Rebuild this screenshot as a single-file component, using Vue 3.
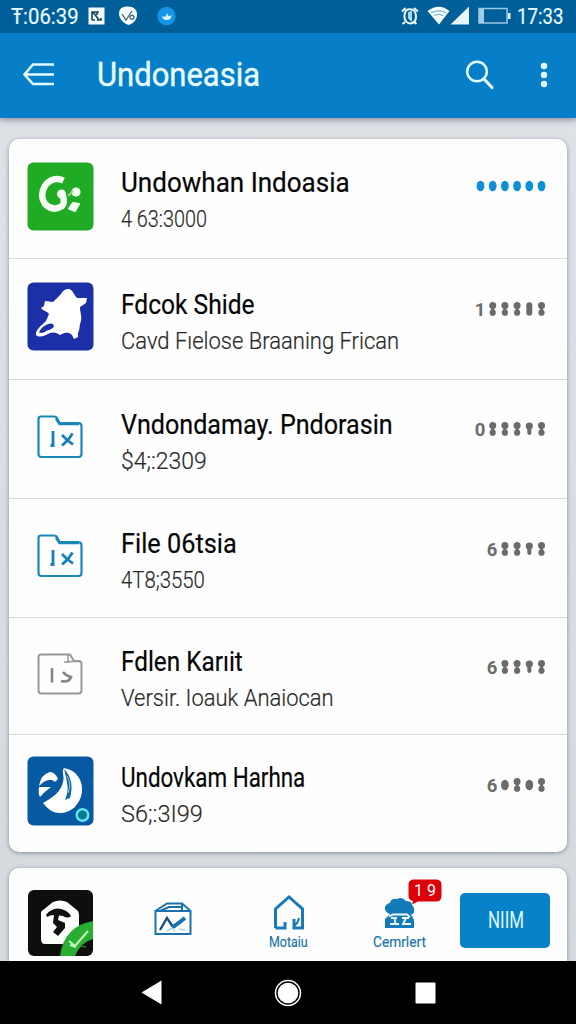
<script setup>
const dotX = [5.5, 17.7, 29.9, 42.1, 54.3, 66.5]

// kinds: o = single drop, b = double bead, p = pin, i = pill
const rows = [
  { icon: 'green', title: 'Undowhan Indoasia', tw: 229, sub: '4 63:3000', sw: 86, h: 120, ty: 1.5, dy: -0.5, lead: '', dots: 'oooooo', blue: true },
  { icon: 'navy', title: 'Fdcok Shide', tw: 134, sub: 'Cavd Fıelose Braaning Frican', sw: 278, h: 121, ty: 3, dy: 1.5, lead: '1', dots: ' bbbib' },
  { icon: 'folder', title: 'Vndondamay. Pndorasin', tw: 272, sub: '$4;:2309', sw: 86, h: 119, ty: 3, dy: 2, lead: '0', dots: ' bbbpb' },
  { icon: 'folder', title: 'File 06tsia', tw: 116, sub: '4T8;3550', sw: 84, h: 119, ty: 2.5, dy: 2.5, lead: '6', dots: '  bbpb' },
  { icon: 'file', title: 'Fdlen Karıit', tw: 122, sub: 'Versir. Ioauk Anaiocan', sw: 213, h: 117, ty: 3, dy: 3, lead: '6', dots: '  bbpb' },
  { icon: 'wave', title: 'Undovkam Harhna', tw: 184, sub: 'S6;:3I99', sw: 82, h: 117, ty: 1, dy: 3.5, lead: '6', dots: '  obob' },
]

// Stretches a label horizontally to the given width
const vFit = {
  mounted(el, { value }) {
    el.style.transform = `scaleX(${value / el.offsetWidth})`
  },
}
</script>

<template>
  <div class="screen">
    <div class="status">
      <span class="clock-left"><b v-fit="68">Ŧ:06:39</b></span>
      <svg class="notif" width="90" height="20" viewBox="0 0 90 20">
        <path d="M0.5 1.5h16v17h-16z" fill="#f4fcff" />
        <path d="M4 14V6h7M5 6l6 8M4 14h3M9 6v3M9 14h4v-2" stroke="#174761" stroke-width="1.6" fill="none" />
        <path d="M39.500 .5C46 .5 49 4 49 8.500C49 14 45 17.500 41 19C36 18 31 13 31 7.500C31 3 34 .5 39.500 .5Z" fill="#f4fcff" />
        <path d="M34 8l4 6 4-6M44 5l-2 3M42 11.500a2 2 0 1 0 3.500-1.500a2 2 0 0 0-3.500 1.500" stroke="#416477" stroke-width="1.3" fill="none" />
        <circle cx="78.500" cy="10" r="9.200" fill="#1594e8" />
        <path d="M74 10q2 1.500 4 0l1-3 1.500 3q1.500 .5 3-1q0 5-5 5q-4 0-4.500-4Z" fill="#d9f5ff" />
      </svg>
      <svg class="system" width="112" height="20" viewBox="0 0 112 20">
        <g fill="none" stroke="#e9faff" stroke-width="2">
          <path d="M6 4.500Q2.500 11 6.500 16Q11 19.500 15 15Q17.500 9 14 4.500Q9.500 2 6 4.500Z" />
          <path d="M2 5.500L5.500 2M14 2l4 3.500M5 16l-2.500 2M14 16l2.500 2" />
          <path d="M9 6v6l2 2V5" stroke-width="1.500" />
        </g>
        <path d="M27.500 5Q39 -3.500 49.500 5L39 18.500Z" fill="#f2fcff" />
        <path d="M31 7q8-4.500 15 0M34 9.500q5-2.500 9 0" fill="none" stroke="#69a4c8" stroke-width="1" />
        <path d="M50.500 18.500L69 .5v18Z" fill="#e5f6ff" />
        <path d="M79 2.500h28v14.500H79z" fill="none" stroke="#9bc8e2" stroke-width="1.500" />
        <path d="M79 3h5v14h-5z" fill="#9ecbe6" />
        <path d="M108 7h2.500v6H108z" fill="#e3f5ff" />
      </svg>
      <span class="clock-right"><b v-fit="47">17:33</b></span>
    </div>

    <header>
      <svg class="back" width="32" height="24" viewBox="0 0 32 24">
        <path d="M31 1.500H10L1.500 11.500L10 21H31M3 11.500H31" fill="none" stroke="#e2fbff" stroke-width="2.600" />
      </svg>
      <h1><span v-fit="163">Undoneasia</span></h1>
      <svg class="search" width="30" height="32" viewBox="0 0 30 32">
        <circle cx="12" cy="12.500" r="9.800" fill="none" stroke="#e2fbff" stroke-width="2.500" />
        <path d="M19 20L27 28.500" stroke="#e2fbff" stroke-width="3.200" stroke-linecap="round" />
      </svg>
      <svg class="more" width="8" height="26" viewBox="0 0 8 26" fill="#e6fbff">
        <circle cx="4" cy="4" r="3.200" /><circle cx="4" cy="13" r="3.200" /><circle cx="4" cy="22" r="3.200" />
      </svg>
    </header>

    <main>
      <section class="card">
        <div v-for="(r, n) in rows" :key="n" class="row" :style="{ height: r.h + 'px' }">
          <div class="icon">
            <svg v-if="r.icon === 'green'" width="67" height="69" viewBox="0 0 67 69">
              <rect x=".5" y=".5" width="66" height="68" rx="6" fill="#1fab24" />
              <path d="M36.500 18.500Q26 14 18.500 23Q12 33 18 42Q26 50 35 44Q38 41 36 34" fill="none" stroke="#f7fff5" stroke-width="6.500" />
              <circle cx="34.500" cy="32" r="4.500" fill="#f7fff5" />
              <circle cx="49" cy="30" r="4.600" fill="#f7fff5" />
              <path d="M41 34L46 29" stroke="#8edb85" stroke-width="2" />
              <path d="M46 41L52 42L48 49L42 46.500Z" fill="#f7fff5" stroke="#f7fff5" stroke-width="2" stroke-linejoin="round" />
            </svg>
            <svg v-else-if="r.icon === 'navy'" width="67" height="69" viewBox="0 0 67 69">
              <rect x=".5" y=".5" width="66" height="68" rx="6" fill="#1b2fa6" />
              <path d="M18 19L26 20C29 17 32 14 34 12C36 8 39 7 42 7C46 8 47 13 50 16L60 16L59 21L53 25C53 31 55 33 54 39C52 44 53 48 51 51L51 55L47 57L45 53C41 49 36 51 33 53C29 50 26 50 23 51C18 54 12 56 9 53C8 48 15 43 19 39L22 32C20 29 16 29 14 26L17 24Z" fill="white" />
              <path d="M12 50.500Q14 45 20 42.500Q26 40 27 44Q26 47 20 48.500Q16 52 12 50.500Z" fill="#1b2fa6" />
            </svg>
            <svg v-else-if="r.icon === 'folder'" class="small" width="46" height="44" viewBox="0 0 46 44">
              <path d="M4 1.500H17Q19.500 1.500 20.500 4L22.500 8H41Q44.500 8 44.500 11V39Q44.500 42 41.500 42H4.500Q1.500 42 1.500 39V4Q1.500 1.500 4 1.500Z" fill="none" stroke="#1888b7" stroke-width="2.200" />
              <path d="M19 3.500L22.500 9H42" stroke="#1888b7" stroke-width="2.400" fill="none" />
              <path d="M16 16V30.500H13.500M25 20L30 25L36 29.500M35.500 18.500L31 25L25 30.500" fill="none" stroke="#1680bd" stroke-width="2.800" />
            </svg>
            <svg v-else-if="r.icon === 'file'" class="small" width="46" height="44" viewBox="0 0 46 44">
              <path d="M4 2.500H33L37 9H42Q44.500 9 44.500 12V38.500Q44.500 41.500 41.500 41.500H4.500Q1.500 41.500 1.500 38.500V5.500Q1.500 2.500 4 2.500Z" fill="none" stroke="#96979b" stroke-width="2" />
              <path d="M31 3V9.500H44M27 10h6" fill="none" stroke="#999" stroke-width="1.500" />
              <path d="M15 16V30.500M26 20Q29 24 34 25Q32 31 24 29" fill="none" stroke="#85868c" stroke-width="2.600" />
            </svg>
            <svg v-else width="67" height="70" viewBox="0 0 67 70">
              <rect x=".5" y=".5" width="66" height="69" rx="6" fill="#0759a1" />
              <path d="M37 12C50 14 56 25 55 36C53 49 44 57 33 57C25 57 20 52 16 47C25 42 34 36 36 26C38 20 34 16 37 12Z" fill="white" />
              <path d="M12 30Q14 18 23 16Q28 16 31 23L28 26Q22 20 12 30ZM12 31L24 31Q17 36 13 41Q11 38 12 31Z" fill="white" />
              <path d="M37 13Q48 24 43 42L38 44Q42 34 40 27Q39 20 37 13Z" fill="#1268a8" />
              <path d="M40 20Q45 28 41 37" fill="none" stroke="#8bc5e7" />
              <circle cx="55.500" cy="59" r="5.800" fill="#087c93" stroke="#65e3ee" stroke-width="2.400" />
            </svg>
          </div>
          <div class="text" :style="{ marginTop: r.ty * 2 + 'px' }">
            <div class="title"><span v-fit="r.tw">{{ r.title }}</span></div>
            <div class="sub"><span v-fit="r.sw">{{ r.sub }}</span></div>
          </div>
          <svg class="dots" :class="{ blue: r.blue }" :style="{ marginTop: r.dy * 2 + 'px' }" width="74" height="20" viewBox="0 0 74 20">
            <text v-if="r.lead" :x="r.lead === '6' ? 17 : 5" y="16.500" text-anchor="middle">{{ r.lead }}</text>
            <template v-for="(x, k) in dotX" :key="k">
              <ellipse v-if="r.dots[k] === 'o'" :cx="x" cy="10" rx="3.900" ry="5.300" />
              <g v-else-if="r.dots[k] === 'b'">
                <circle :cx="x" cy="6.600" r="3.500" /><circle :cx="x" cy="13.700" r="3.100" />
                <rect :x="x - 1.500" y="7" width="3" height="6" />
              </g>
              <g v-else-if="r.dots[k] === 'p'">
                <circle :cx="x" cy="7" r="3.600" /><rect :x="x - 2" y="8" width="4" height="8" rx="2" />
              </g>
              <rect v-else-if="r.dots[k] === 'i'" :x="x - 3" y="3.300" width="6" height="13.500" rx="3" />
            </template>
          </svg>
        </div>
      </section>

      <section class="card dock">
        <svg class="app" width="65" height="66" viewBox="0 0 65 66">
          <defs><clipPath id="tile"><rect width="65" height="66" rx="6" /></clipPath></defs>
          <g clip-path="url(#tile)">
            <rect width="65" height="66" fill="#0d0f0d" />
            <path d="M25 12Q32 9 39 12L50 21Q51 23 51 27V48Q50 54 45 54H17Q13 54 13 49V23Q13 21 15 20Z" fill="#fcfffb" />
            <path d="M18 25Q22 19 30 18.500Q39 19 43 26Q40 29 35 26L31 25.500L30 30L37 33L37 38L30 46L25 42L29 37L25 33L26 25Q22 25 19 27Z" fill="#10120f" />
            <path d="M32 66Q36 36 65 31V49Q53 52 47 66Z" fill="#29ad32" />
            <path d="M41 51L47 56L60 41M42 55l6 2" fill="none" stroke="#bdf4ba" stroke-width="2.200" />
            <path d="M53 56l5 1" stroke="#267c2b" stroke-width="1.500" />
          </g>
        </svg>
        <div class="tab mail">
          <svg width="38" height="34" viewBox="0 0 38 34" fill="none" stroke="#1972ae" stroke-width="2">
            <path d="M1.500 9H36.500V32H1.500ZM2 8.500L13 1.500H28L36 8.500M28 2V8M6 9L15 5H27" />
            <path d="M6 28L13 16L19 25L25 20" stroke-width="2.300" stroke="#124e83" />
            <path d="M19 25L22 23L31 16" stroke-width="4" />
            <path d="M13 29L18 26L21 29M25 27l6 1" stroke="#a9d4ef" stroke-width="1.500" />
          </svg>
        </div>
        <div class="tab home">
          <svg width="32" height="37" viewBox="0 0 32 37">
            <path d="M2.500 34V15L16 3L29.500 15V34H21V25M2.500 34H12V28" fill="none" stroke="#187bb8" stroke-width="3" />
            <path d="M20 32Q25 30 26 24" fill="none" stroke="#187bb8" stroke-width="2" />
          </svg>
          <div class="label"><span v-fit="39">Motaiu</span></div>
        </div>
        <div class="tab contact">
          <svg width="32" height="33" viewBox="0 0 32 33">
            <path d="M6 18Q0 16 1 11Q3 7 6 7Q7 2 13 3Q18 0 22 5Q28 5 28 9Q32 13 29 18H27L30 24V32H1V23Z" fill="#147bbb" />
            <path d="M5 20.500L9 18.500H23L26 21M7 22h6M11 22v6M6 28h9M18 22h7M22 22l-3 6h8" fill="none" stroke="#f0fbff" stroke-width="1.900" />
          </svg>
          <div class="label"><span v-fit="53">Cemrlert</span></div>
          <div class="badge">
            <svg width="34" height="26" viewBox="0 0 34 26"><path d="M6 .5H28Q33.500 .5 33.500 6V17Q33.500 22.500 28 22.500H10L4 25.500L5 22Q.5 21 .5 17V6Q.5 .5 6 .5Z" fill="#dc0108" /></svg>
            <span>1 9</span>
          </div>
        </div>
        <button><span v-fit="36">NIIM</span></button>
      </section>
    </main>

    <nav>
      <svg width="21" height="25" viewBox="0 0 21 25"><path d="M.5 12.500L20.500 .5V24.500Z" fill="#fff" /></svg>
      <svg width="28" height="28" viewBox="0 0 28 28"><circle cx="14" cy="14" r="12.500" fill="none" stroke="#fff" stroke-width="1.500" /><circle cx="14" cy="14" r="10.300" fill="#fff" /></svg>
      <svg width="21" height="22" viewBox="0 0 21 22"><rect x=".5" y=".5" width="20" height="21" rx="1" fill="#fff" /></svg>
    </nav>
  </div>
</template>

<style>
body { margin: 0; overflow: hidden; }
</style>

<style scoped>
.screen {
  width: 576px;
  height: 1024px;
  overflow: hidden;
  display: flex;
  flex-direction: column;
  background: linear-gradient(#dfe2e6, #d5d9de);
  font-family: Roboto, "Noto Sans", sans-serif;
}
svg { display: block; flex: none; }
span, b { white-space: pre; }
h1 span, .title span, .sub span, .label span, button span, .status b {
  display: inline-block;
  transform-origin: 0 50%;
}
.status {
  height: 33px;
  flex: none;
  display: flex;
  align-items: center;
  box-sizing: border-box;
  padding-left: 11px;
  background: #005f99;
  color: #e4faff;
}
.status b { font-size: 21.5px; font-weight: 400; line-height: 30px; -webkit-text-stroke: .2px; }
.clock-left { width: 77px; }
.notif { margin-bottom: 2px; }
.system { margin-left: 222px; margin-bottom: 1px; }
.clock-right { margin-left: 5px; }
header {
  height: 85px;
  flex: none;
  display: flex;
  align-items: center;
  background: #067fc8;
  color: #e7fcff;
  box-shadow: 0 2px 6px rgba(60, 65, 90, .5);
}
.back { margin-left: 23px; margin-top: -1px; }
h1 { margin: -2px 0 0 42px; width: 368px; font-size: 32.5px; line-height: 40px; font-weight: 400; -webkit-text-stroke: .4px; }
.search { margin-top: -2px; }
.more { margin-left: 45px; margin-top: -1px; }
main { height: 843px; box-sizing: border-box; padding: 21px 9px 0; overflow: hidden; flex: none; }
.card {
  border-radius: 10px;
  background: #fefefe;
  box-shadow: 0 1px 4px rgba(55, 65, 80, .5);
}
.row {
  display: flex;
  align-items: center;
  box-sizing: border-box;
  padding: 0 18px 0 18px;
  border-bottom: 1px solid #d8dadd;
}
.row:last-child { border-bottom: 0; }
.icon { width: 94px; padding: 0 0 5px; flex: none; }
.icon .small { margin-left: 10px; }
.text { flex: 1; min-width: 0; padding-top: 2px; }
.title, .sub { height: 37px; line-height: 37px; }
.title { font-size: 27.5px; color: #050505; -webkit-text-stroke: .2px; }
.sub { font-size: 23.5px; color: #292929; font-weight: 300; -webkit-text-stroke: .2px; }
.dots { margin-bottom: 24px; fill: #6b6b6b; }
.dots.blue { fill: #0d8fd7; }
.dots text { font: 700 18.5px Roboto, sans-serif; }
.dock {
  display: flex;
  height: 120px;
  margin-top: 16px;
  padding: 0 17px 0 19px;
  box-sizing: border-box;
}
.app { margin-top: 22px; }
.tab { display: flex; flex-direction: column; align-items: center; color: #2475a5; }
.mail { margin: 34px 0 0 61px; }
.home { width: 39px; margin: 26px 0 0 77px; }
.contact { width: 53px; margin: 28px 0 0 65px; position: relative; }
.label { width: 100%; font-size: 15px; line-height: 19px; -webkit-text-stroke: .2px; }
.home .label { margin-top: 2px; }
.contact .label { margin-top: 4px; }
.badge { position: absolute; left: 35px; top: -17px; width: 34px; color: #fff; }
.badge span { position: absolute; inset: 0; text-align: center; line-height: 24px; font-size: 16px; }
button {
  width: 90px;
  height: 55px;
  margin: 25px 0 0 auto;
  padding: 0 0 0 28px;
  border: 0;
  border-radius: 5px;
  background: #0782c9;
  color: #dff8ff;
  font: 400 23px Roboto, sans-serif;
  text-align: left;
}
nav {
  flex: 1;
  display: flex;
  align-items: center;
  background: #000;
  padding-left: 141px;
  position: relative;
}
nav svg + svg { margin-left: 112px; }
nav svg + svg + svg { margin-left: 113px; }
</style>
